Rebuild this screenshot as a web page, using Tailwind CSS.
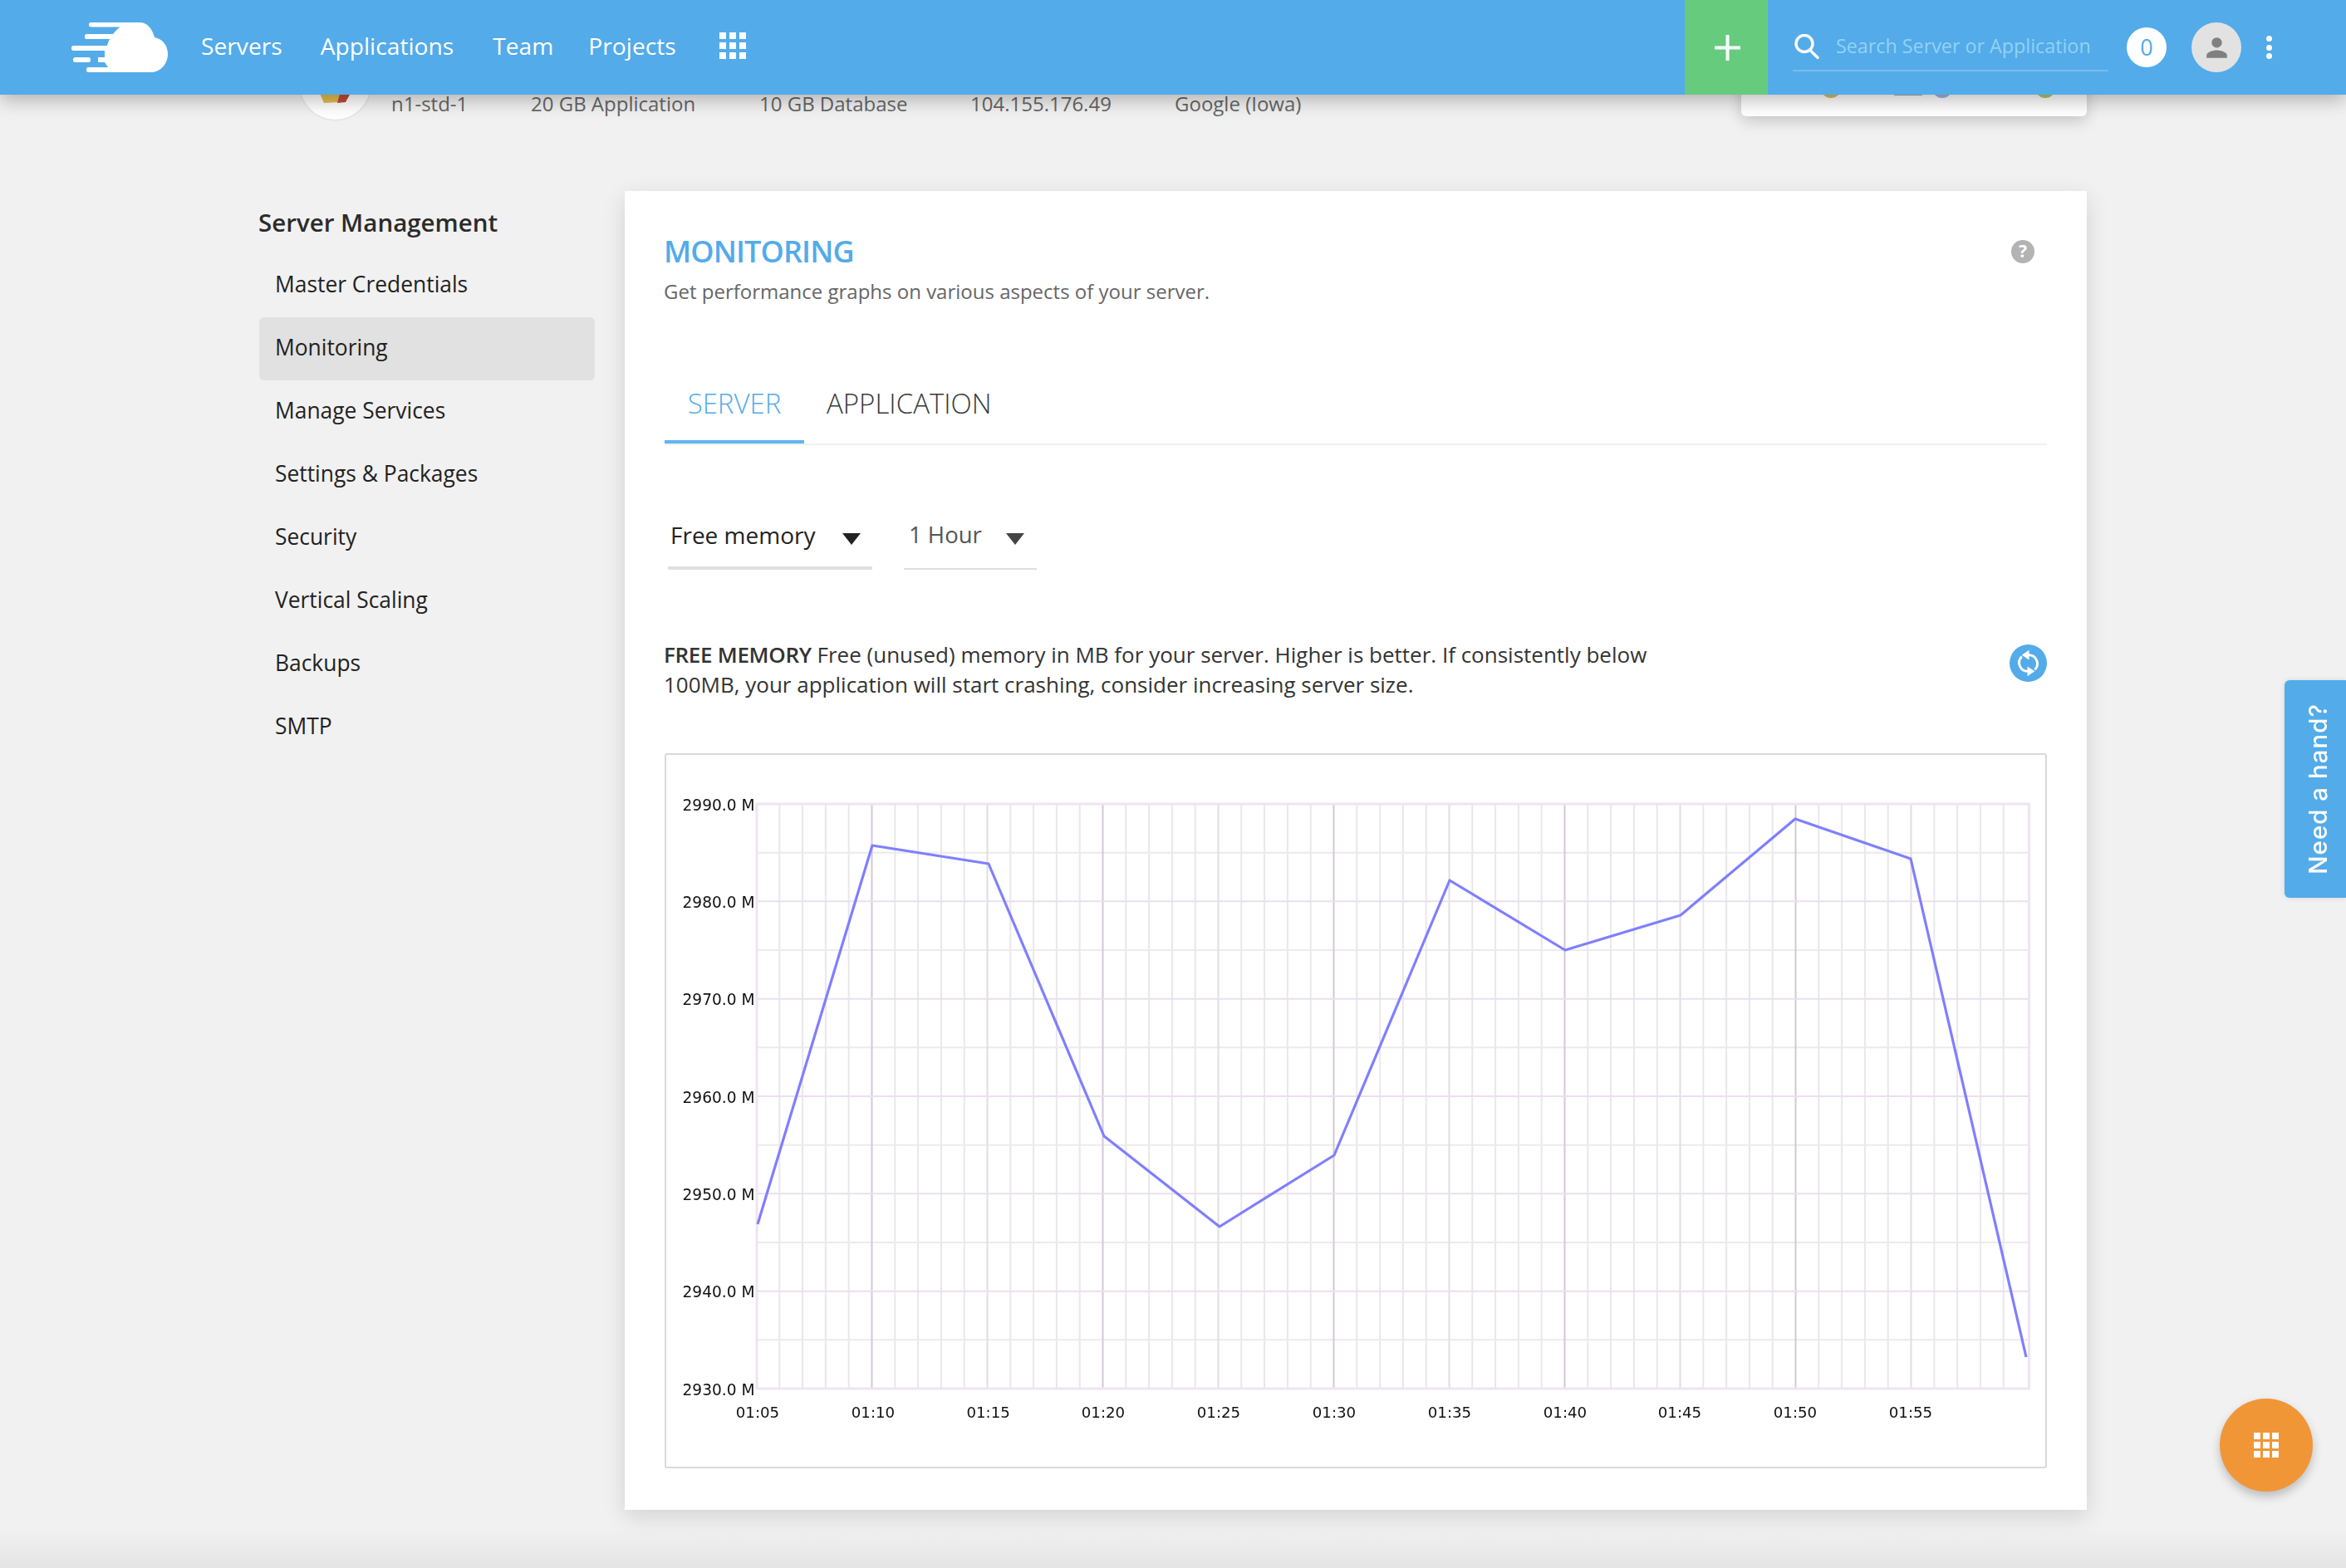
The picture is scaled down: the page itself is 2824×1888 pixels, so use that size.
<!DOCTYPE html>
<html lang="en">
<head>
    <meta charset="UTF-8">
    <title>Monitoring</title>
    <script src="https://cdn.jsdelivr.net/npm/@tailwindcss/browser@4"></script>
</head>
<body class="bg-[#f1f1f1] font-['Open_Sans',sans-serif]">
<div class="relative w-[2824px] h-[1888px] overflow-hidden">

    <!-- Top bar -->
    <header class="relative z-20 flex items-center h-[114px] bg-[#53abe9] shadow-[0_6px_22px_rgba(0,0,0,0.28)] text-white">
        <svg class="ml-[86px] w-[117px] h-[60px]" viewBox="86 26 117 60" fill="#fff">
            <path d="M145 26H168C177 26 183 33 186 44C196 46 202 54 202 64C202 76 193 86 182 86H130L130 80L126 74H118V68H126V60H128C128 50 136 38 145 31Z"/>
            <rect x="107" y="26" width="42" height="5.5" rx="2.5"/>
            <rect x="102" y="40" width="42" height="6" rx="2.5"/>
            <rect x="86" y="54" width="46" height="6" rx="2.5"/>
            <rect x="88" y="68" width="21" height="6" rx="2.5"/>
            <rect x="104" y="80" width="30" height="6" rx="2.5"/>
        </svg>
        <nav class="flex items-center ml-[39px] -mt-[3px] text-[28.2px]">
            <a class="mr-[46px]">Servers</a>
            <a class="mr-[47px]">Applications</a>
            <a class="mr-[42px]">Team</a>
            <a>Projects</a>
            <div class="grid grid-cols-3 gap-[4px] ml-[52px]">
                <i class="w-[8px] h-[8px] bg-white"></i><i class="w-[8px] h-[8px] bg-white"></i><i class="w-[8px] h-[8px] bg-white"></i>
                <i class="w-[8px] h-[8px] bg-white"></i><i class="w-[8px] h-[8px] bg-white"></i><i class="w-[8px] h-[8px] bg-white"></i>
                <i class="w-[8px] h-[8px] bg-white"></i><i class="w-[8px] h-[8px] bg-white"></i><i class="w-[8px] h-[8px] bg-white"></i>
            </div>
        </nav>

        <div class="flex items-center ml-auto mr-[89px] h-full">
            <button class="flex items-center justify-center w-[100px] h-full pl-[3px] bg-[#67cb7e]">
                <svg class="w-[31px] h-[31px]" viewBox="0 0 31 31" stroke="#fff" stroke-width="4"><path d="M15.5 0V31M0 15.5H31"/></svg>
            </button>
            <div class="flex items-center gap-[20px] w-[380px] h-[58px] ml-[30px] pl-[2px] border-b-2 border-[#78bdee]">
                <svg class="w-[30px] h-[30px]" viewBox="0 0 30 30" fill="none" stroke="#fff" stroke-width="3.4"><circle cx="12" cy="11.5" r="10"/><path d="M18.5 19L29 29.5"/></svg>
                <span class="text-[23.3px] text-[#92d2f4] -mt-[2px]">Search Server or Application</span>
            </div>
            <div class="flex items-center justify-center w-[48px] h-[48px] ml-[22px] rounded-full bg-white text-[27px] text-[#53abe9]">0</div>
            <div class="flex items-center justify-center w-[60px] h-[60px] ml-[30px] rounded-full bg-[#e2e2e2]">
                <svg class="w-[37px] h-[37px]" viewBox="0 0 24 24" fill="#808080"><path d="M12 12c2.21 0 4-1.79 4-4s-1.79-4-4-4-4 1.79-4 4 1.79 4 4 4zm0 2c-2.67 0-8 1.34-8 4v2h16v-2c0-2.66-5.33-4-8-4z"/></svg>
            </div>
            <div class="flex flex-col gap-[3.5px] ml-[30px]">
                <i class="w-[7px] h-[7px] rounded-full bg-white"></i>
                <i class="w-[7px] h-[7px] rounded-full bg-white"></i>
                <i class="w-[7px] h-[7px] rounded-full bg-white"></i>
            </div>
        </div>
    </header>

    <!-- Server summary strip, mostly scrolled under the bar -->
    <div class="flex items-start h-[116px] pl-[361px] text-[24px] text-[#666]">
        <div class="relative w-[85px] h-[85px] -mt-[55px] rounded-full bg-white shadow-[0_0_3px_rgba(0,0,0,0.15)] overflow-hidden">
            <svg class="absolute left-[18px] top-[40px] w-[46px] h-[30px]" viewBox="0 0 46 30"><path d="M0 0H34L28 24L11 25Z" fill="#e4bd4c"/><path d="M34 0H50L37 24L27 25Z" fill="#c04a37"/></svg>
        </div>
        <div class="grid grid-cols-[168px_275px_254px_245px_auto] ml-[25px] -mt-[3px] leading-[28px]">
            <span>n1-std-1</span>
            <span>20 GB Application</span>
            <span>10 GB Database</span>
            <span>104.155.176.49</span>
            <span class="ml-px">Google (Iowa)</span>
        </div>
        <div class="relative w-[416px] h-[86px] ml-auto mr-[312px] -mt-[60px] rounded-b-md bg-white shadow-[0_6px_18px_rgba(0,0,0,0.18)]">
            <i class="absolute left-[96px] top-[52px] w-[24px] h-[12px] rounded-b-full bg-[#d9b963]"></i>
            <i class="absolute left-[184px] top-[52px] w-[34px] h-[9px] bg-[#a9a9a9]"></i>
            <i class="absolute left-[230px] top-[52px] w-[24px] h-[12px] rounded-b-full bg-[#a3b1dd]"></i>
            <i class="absolute left-[354px] top-[52px] w-[24px] h-[12px] rounded-b-full bg-[#a5cb6a]"></i>
        </div>
    </div>

    <div class="flex pl-[311px]">
        <!-- Sidebar -->
        <aside class="w-[441px] pt-[18px] text-[#222]">
            <h2 class="h-[40px] mb-[18px] text-[29.5px] leading-[40px] font-semibold text-[#2b2b2b]">Server Management</h2>
            <ul class="w-[404px] ml-px text-[26.4px]">
                <li class="flex items-center h-[76px] pl-[19px] pb-[3px] rounded-md">Master Credentials</li>
                <li class="flex items-center h-[76px] pl-[19px] pb-[3px] rounded-md bg-[#e1e1e1]">Monitoring</li>
                <li class="flex items-center h-[76px] pl-[19px] pb-[3px] rounded-md">Manage Services</li>
                <li class="flex items-center h-[76px] pl-[19px] pb-[3px] rounded-md">Settings &amp; Packages</li>
                <li class="flex items-center h-[76px] pl-[19px] pb-[3px] rounded-md">Security</li>
                <li class="flex items-center h-[76px] pl-[19px] pb-[3px] rounded-md">Vertical Scaling</li>
                <li class="flex items-center h-[76px] pl-[19px] pb-[3px] rounded-md">Backups</li>
                <li class="flex items-center h-[76px] pl-[19px] pb-[3px] rounded-md">SMTP</li>
            </ul>
        </aside>

        <!-- Monitoring card -->
        <main class="w-[1760px] h-[1588px] pt-[50px] px-[48px] bg-white shadow-[0_8px_26px_rgba(0,0,0,0.13)]">
            <div class="flex items-center justify-between h-[46px]">
                <h1 class="-ml-px text-[36px] leading-[46px] font-semibold text-[#53abe9] tracking-[-0.9px]">MONITORING</h1>
                <span class="flex items-center justify-center w-[28px] h-[28px] mr-[15px] rounded-full bg-[#b3b3b3] text-[21px] font-bold text-white">?</span>
            </div>
            <p class="-ml-px mt-[8px] text-[24px] leading-[34px] text-[#666]">Get performance graphs on various aspects of your server.</p>

            <div class="flex h-[96px] mt-[72px] border-b-2 border-[#f0f0f0] text-[33px] font-light">
                <div class="flex items-center justify-center w-[168px] h-[94px] pt-[1px] border-b-4 border-[#5fb5f1] text-[#53abe9]">SERVER</div>
                <div class="flex items-center h-[94px] pl-[27px] pb-[3px] text-[#3a3a3a]">APPLICATION</div>
            </div>

            <div class="flex gap-[38px] mt-[72px] text-[28px] leading-[40px]">
                <div class="flex items-start justify-between w-[246px] h-[78px] ml-[4px] pt-[16px] pl-[3px] pr-[14px] border-b-4 border-[#e0e0e0] text-[#222]">
                    <span>Free memory</span>
                    <i class="mt-[18px] border-x-[11.5px] border-t-[14px] border-x-transparent border-t-[#222]"></i>
                </div>
                <div class="flex items-start justify-between w-[160px] h-[78px] pt-[16px] pl-[6px] pr-[15px] border-b-2 border-[#e0e0e0] text-[27.5px] text-[#555]">
                    <span>1 Hour</span>
                    <i class="mt-[18px] border-x-[11.5px] border-t-[14px] border-x-transparent border-t-[#444]"></i>
                </div>
            </div>

            <div class="flex items-start justify-between mt-[85px]">
                <p class="-ml-px -mt-[1px] text-[26px] leading-[36px] text-[#333]"><b class="font-semibold tracking-[-0.3px]">FREE MEMORY</b> Free (unused) memory in MB for your server. Higher is better. If consistently below<br>100MB, your application will start crashing, consider increasing server size.</p>
                <svg class="w-[45px] h-[45px] mt-[5px]" viewBox="0 0 46 46">
                    <circle cx="23" cy="23" r="23" fill="#53abe9"/>
                    <g fill="none" stroke="#fff" stroke-width="3"><path d="M23 13A10.5 10.5 0 0 1 31 31"/><path d="M23 33A10.5 10.5 0 0 1 15 15"/></g>
                    <path d="M24 7L15 13L24 19ZM22 27L31 33L22 39Z" fill="#fff"/>
                </svg>
            </div>

            <!-- Free memory chart -->
            <div class="w-[1664px] h-[861px] mt-[65px] border-2 border-[#d9d9d9] rounded-[3px]">
                <svg class="block w-[1660px] h-[857px] blur-[0.7px]" viewBox="802 910 1660 857" fill="none">
                    <!-- minor minutes -->
                    <path stroke="#e9e7eb" stroke-width="2" d="M938.3 969V1673M966.1 969V1673M993.9 969V1673M1021.7 969V1673M1077.3 969V1673M1105.1 969V1673M1132.9 969V1673M1160.7 969V1673M1216.3 969V1673M1244.1 969V1673M1271.9 969V1673M1299.7 969V1673M1355.3 969V1673M1383.1 969V1673M1410.9 969V1673M1438.7 969V1673M1494.3 969V1673M1522.1 969V1673M1549.9 969V1673M1577.7 969V1673M1633.3 969V1673M1661.1 969V1673M1688.9 969V1673M1716.7 969V1673M1772.3 969V1673M1800.1 969V1673M1827.9 969V1673M1855.7 969V1673M1911.3 969V1673M1939.1 969V1673M1966.9 969V1673M1994.7 969V1673M2050.3 969V1673M2078.1 969V1673M2105.9 969V1673M2133.7 969V1673M2189.3 969V1673M2217.1 969V1673M2244.9 969V1673M2272.7 969V1673M2328.3 969V1673M2356.1 969V1673M2383.9 969V1673M2411.7 969V1673"/>
                    <!-- half steps -->
                    <path stroke="#ebebeb" stroke-width="2" d="M912 1027.7H2443M912 1145H2443M912 1262.3H2443M912 1379.7H2443M912 1497H2443M912 1614.3H2443"/>
                    <!-- five minutes -->
                    <path stroke="#e2dde4" stroke-width="2" d="M1188.5 969V1673M1466.5 969V1673M1744.5 969V1673M2022.5 969V1673M2300.5 969V1673"/>
                    <!-- ten minutes -->
                    <path stroke="#d4c7d8" stroke-width="2" d="M1049.5 969V1673M1327.5 969V1673M1605.5 969V1673M1883.5 969V1673M2161.5 969V1673"/>
                    <!-- value steps -->
                    <path stroke="#ecdff0" stroke-width="2" d="M912 1086.3H2443M912 1203.7H2443M912 1321H2443M912 1438.3H2443M912 1555.7H2443"/>
                    <rect x="911" y="969" width="1531.5" height="704" stroke="#efe4f2" stroke-width="3"/>

                    <polyline stroke="#7f7fff" stroke-width="3.2" stroke-linejoin="round" points="912,1475 1050,1019 1190,1041 1329,1369 1468,1478 1606,1392 1745,1061 1884,1145 2023,1103 2161,987 2300,1035 2439,1635"/>

                    <g class="font-['DejaVu_Sans',sans-serif] text-[18.6px]" fill="#111" text-anchor="end">
                        <text x="908.5" y="976.5">2990.0 M</text>
                        <text x="908.5" y="1093.5">2980.0 M</text>
                        <text x="908.5" y="1211">2970.0 M</text>
                        <text x="908.5" y="1328.5">2960.0 M</text>
                        <text x="908.5" y="1445.5">2950.0 M</text>
                        <text x="908.5" y="1563">2940.0 M</text>
                        <text x="908.5" y="1680.5">2930.0 M</text>
                    </g>
                    <g class="font-['DejaVu_Sans',sans-serif] text-[18.2px]" fill="#111" text-anchor="middle">
                        <text x="912" y="1707.5">01:05</text>
                        <text x="1051" y="1707.5">01:10</text>
                        <text x="1189.6" y="1707.5">01:15</text>
                        <text x="1328" y="1707.5">01:20</text>
                        <text x="1467" y="1707.5">01:25</text>
                        <text x="1606" y="1707.5">01:30</text>
                        <text x="1745" y="1707.5">01:35</text>
                        <text x="1884" y="1707.5">01:40</text>
                        <text x="2022" y="1707.5">01:45</text>
                        <text x="2161" y="1707.5">01:50</text>
                        <text x="2300" y="1707.5">01:55</text>
                    </g>
                </svg>
            </div>
        </main>
    </div>

    <!-- Footer shadow along the bottom edge -->
    <div class="absolute bottom-0 left-0 right-0 h-[48px] bg-linear-to-b from-transparent to-[#e4e4e4]"></div>

    <!-- Help tab -->
    <div class="absolute right-0 top-[819px] z-10 flex items-center justify-center w-[74px] h-[262px] pl-[6px] rounded-l-md bg-[#53abe9] shadow-[0_0_6px_rgba(0,0,0,0.12)]">
        <span class="[writing-mode:vertical-rl] rotate-180 font-['Inter',sans-serif] text-[29.5px] font-medium tracking-[1px] text-white">Need a hand?</span>
    </div>

    <!-- Floating action button -->
    <button class="absolute left-[2672px] top-[1684px] z-10 flex items-center justify-center w-[112px] h-[112px] rounded-full bg-[#f09637] shadow-[0_6px_12px_rgba(0,0,0,0.22)]">
        <span class="grid grid-cols-3 gap-[3.6px]">
            <i class="w-[7.4px] h-[7.4px] bg-white"></i><i class="w-[7.4px] h-[7.4px] bg-white"></i><i class="w-[7.4px] h-[7.4px] bg-white"></i>
            <i class="w-[7.4px] h-[7.4px] bg-white"></i><i class="w-[7.4px] h-[7.4px] bg-white"></i><i class="w-[7.4px] h-[7.4px] bg-white"></i>
            <i class="w-[7.4px] h-[7.4px] bg-white"></i><i class="w-[7.4px] h-[7.4px] bg-white"></i><i class="w-[7.4px] h-[7.4px] bg-white"></i>
        </span>
    </button>
</div>
</body>
</html>
